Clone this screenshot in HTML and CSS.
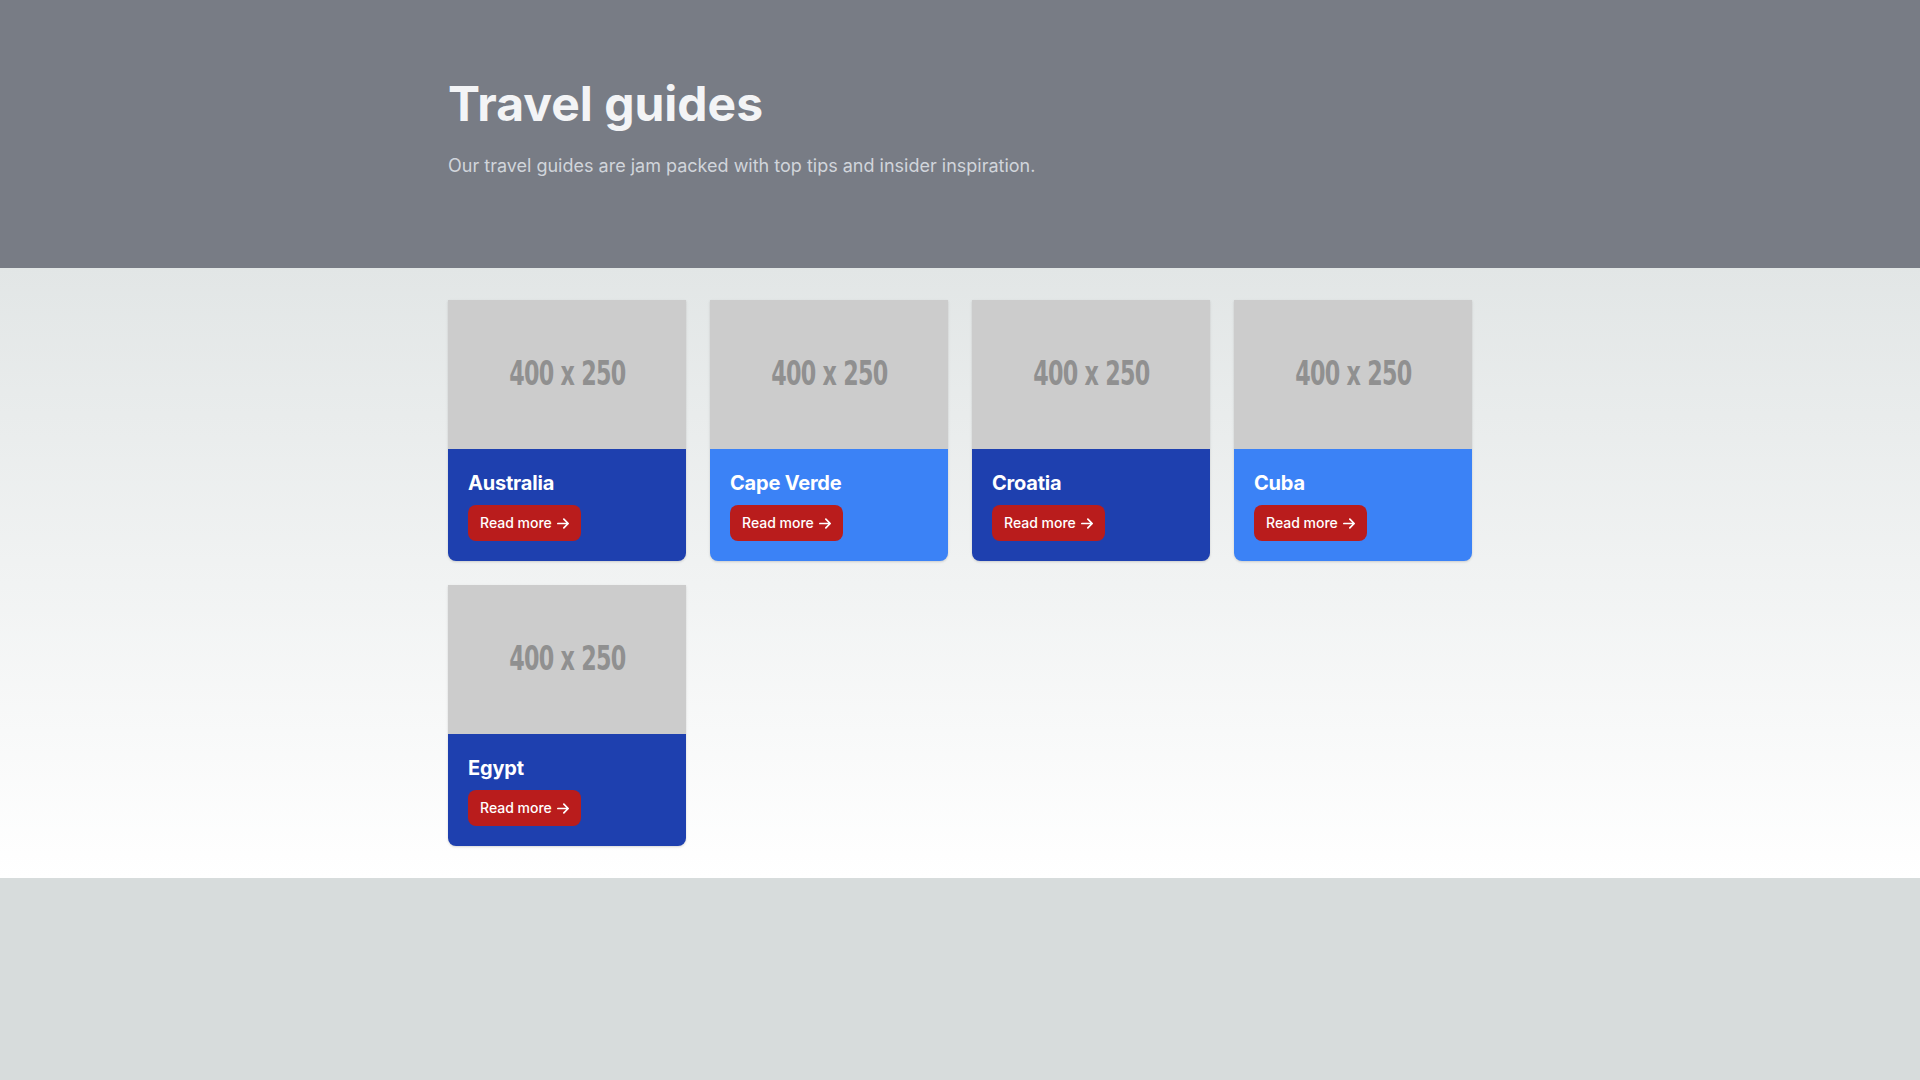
FILE: index.html
```html
<!DOCTYPE html>
<html lang="en">
<head>
<meta charset="utf-8">
<title>Travel guides</title>
<link rel="stylesheet" href="styles.css">
</head>
<body>
<header class="hero">
  <div class="container">
    <h1 class="hero-title">Travel guides</h1>
    <p class="hero-sub">Our travel guides are jam packed with top tips and insider inspiration.</p>
  </div>
</header>
<main class="guides">
  <div class="container grid">
    <article class="card card-dark">
      <div class="thumb"><span>400 x 250</span></div>
      <div class="card-body">
        <h2 class="card-title">Australia</h2>
        <a class="btn" href="#">Read more <svg class="arrow" viewBox="0 0 14 12" fill="none"><path d="M1 6h12m0 0L8 1m5 5L8 11" stroke="currentColor" stroke-width="2" stroke-linecap="round" stroke-linejoin="round"/></svg></a>
      </div>
    </article>
    <article class="card card-light">
      <div class="thumb"><span>400 x 250</span></div>
      <div class="card-body">
        <h2 class="card-title">Cape Verde</h2>
        <a class="btn" href="#">Read more <svg class="arrow" viewBox="0 0 14 12" fill="none"><path d="M1 6h12m0 0L8 1m5 5L8 11" stroke="currentColor" stroke-width="2" stroke-linecap="round" stroke-linejoin="round"/></svg></a>
      </div>
    </article>
    <article class="card card-dark">
      <div class="thumb"><span>400 x 250</span></div>
      <div class="card-body">
        <h2 class="card-title">Croatia</h2>
        <a class="btn" href="#">Read more <svg class="arrow" viewBox="0 0 14 12" fill="none"><path d="M1 6h12m0 0L8 1m5 5L8 11" stroke="currentColor" stroke-width="2" stroke-linecap="round" stroke-linejoin="round"/></svg></a>
      </div>
    </article>
    <article class="card card-light">
      <div class="thumb"><span>400 x 250</span></div>
      <div class="card-body">
        <h2 class="card-title">Cuba</h2>
        <a class="btn" href="#">Read more <svg class="arrow" viewBox="0 0 14 12" fill="none"><path d="M1 6h12m0 0L8 1m5 5L8 11" stroke="currentColor" stroke-width="2" stroke-linecap="round" stroke-linejoin="round"/></svg></a>
      </div>
    </article>
    <article class="card card-dark">
      <div class="thumb"><span>400 x 250</span></div>
      <div class="card-body">
        <h2 class="card-title">Egypt</h2>
        <a class="btn" href="#">Read more <svg class="arrow" viewBox="0 0 14 12" fill="none"><path d="M1 6h12m0 0L8 1m5 5L8 11" stroke="currentColor" stroke-width="2" stroke-linecap="round" stroke-linejoin="round"/></svg></a>
      </div>
    </article>
  </div>
</main>
</body>
</html>
```
FILE: styles.css
```css
* { box-sizing: border-box; }
html, body { margin: 0; padding: 0; }
body {
  background: #d7dcdc;
  font-family: Inter, "Noto Sans", sans-serif;
  min-height: 1080px;
}
.container {
  max-width: 1024px;
  margin: 0 auto;
}
.hero {
  background: #787c85;
  padding: 80px 0 88px;
}
.hero-title {
  margin: 0 0 24px;
  font-size: 48px;
  line-height: 48px;
  font-weight: 700;
  color: #f3f4f6;
}
.hero-sub {
  margin: 0;
  font-size: 18px;
  line-height: 28px;
  color: #d1d5db;
}
.guides {
  background: linear-gradient(to bottom, #e2e6e6, #ffffff);
  padding: 32px 0;
}
.grid {
  display: grid;
  grid-template-columns: repeat(4, 238px);
  gap: 24px;
}
.card {
  border-radius: 0 0 8px 8px;
  overflow: hidden;
  box-shadow: 0 1px 3px rgba(0,0,0,0.1), 0 1px 2px rgba(0,0,0,0.06);
}
.card-dark { background: #1e40af; }
.card-light { background: #3b82f6; }
.thumb {
  height: 149px;
  background: #cccccc;
  display: flex;
  align-items: center;
  justify-content: center;
}
.thumb span {
  display: inline-block;
  font-family: "DejaVu Sans", sans-serif;
  font-stretch: condensed;
  font-weight: 700;
  font-size: 33px;
  line-height: 1;
  color: #909090;
  letter-spacing: -1px;
  transform: translateY(-1px) scaleX(0.75);
}
.card-body {
  padding: 20px;
}
.card-title {
  margin: 0 0 8px;
  font-size: 20px;
  line-height: 28px;
  font-weight: 700;
  color: #ffffff;
  letter-spacing: -0.2px;
}
.btn {
  display: inline-flex;
  align-items: center;
  padding: 8px 12px;
  font-size: 14px;
  line-height: 20px;
  font-weight: 500;
  color: #ffffff;
  background: #b91c1c;
  border-radius: 8px;
  text-decoration: none;
}
.arrow {
  width: 12px;
  height: 11px;
  margin-left: 5px;
}
```
